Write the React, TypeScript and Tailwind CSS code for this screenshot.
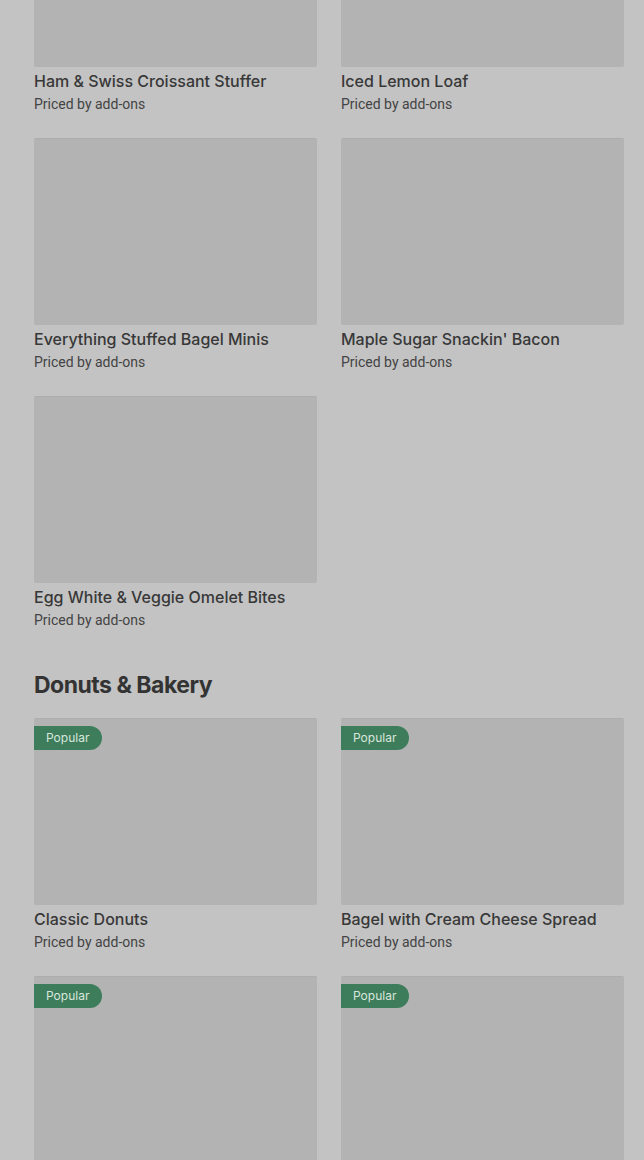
import React from 'react';

type Item = { name?: string; popular?: boolean };

const breakfast: Item[] = [
  { name: 'Ham & Swiss Croissant Stuffer' },
  { name: 'Iced Lemon Loaf' },
  { name: 'Everything Stuffed Bagel Minis' },
  { name: "Maple Sugar Snackin' Bacon" },
  { name: 'Egg White & Veggie Omelet Bites' },
];

// last row is cut by the bottom edge, only the photos show
const bakery: Item[] = [
  { name: 'Classic Donuts', popular: true },
  { name: 'Bagel with Cream Cheese Spread', popular: true },
  { popular: true },
  { popular: true },
];

function ItemCard({ item }: { item: Item }) {
  return (
    <div className="flex flex-col">
      <div className="relative h-[187px] rounded-[2px] bg-[#b3b3b3] border-t border-[#adadad]">
        {item.popular && (
          <span className="absolute left-0 top-[7px] h-6 w-[68px] flex items-center pl-3 rounded-r-full bg-[#3e7d5b] text-[12px] text-[#d9e6dd]">
            Popular
          </span>
        )}
      </div>
      {item.name && (
        <>
          <p className="mt-[2px] text-[16px] leading-6 font-medium text-[#383838]">{item.name}</p>
          <p
            className="mt-px text-[14px] leading-5 text-[#444]"
            style={{ fontFamily: 'Roboto, sans-serif' }}
          >
            Priced by add-ons
          </p>
        </>
      )}
    </div>
  );
}

export default function App() {
  return (
    <div
      className="h-[1160px] overflow-hidden bg-[#c3c3c3] pl-[34px] pr-5"
      style={{ fontFamily: 'Inter, Roboto, sans-serif' }}
    >
      <div className="-mt-[120px]">
        <div className="grid grid-cols-2 gap-x-6 gap-y-6">
          {breakfast.map((item, i) => (
            <ItemCard key={i} item={item} />
          ))}
        </div>
        <h2 className="mt-[39px] mb-[17px] text-[23px] leading-8 font-bold tracking-[-0.5px] text-[#333]">
          Donuts &amp; Bakery
        </h2>
        <div className="grid grid-cols-2 gap-x-6 gap-y-6">
          {bakery.map((item, i) => (
            <ItemCard key={i} item={item} />
          ))}
        </div>
      </div>
    </div>
  );
}
